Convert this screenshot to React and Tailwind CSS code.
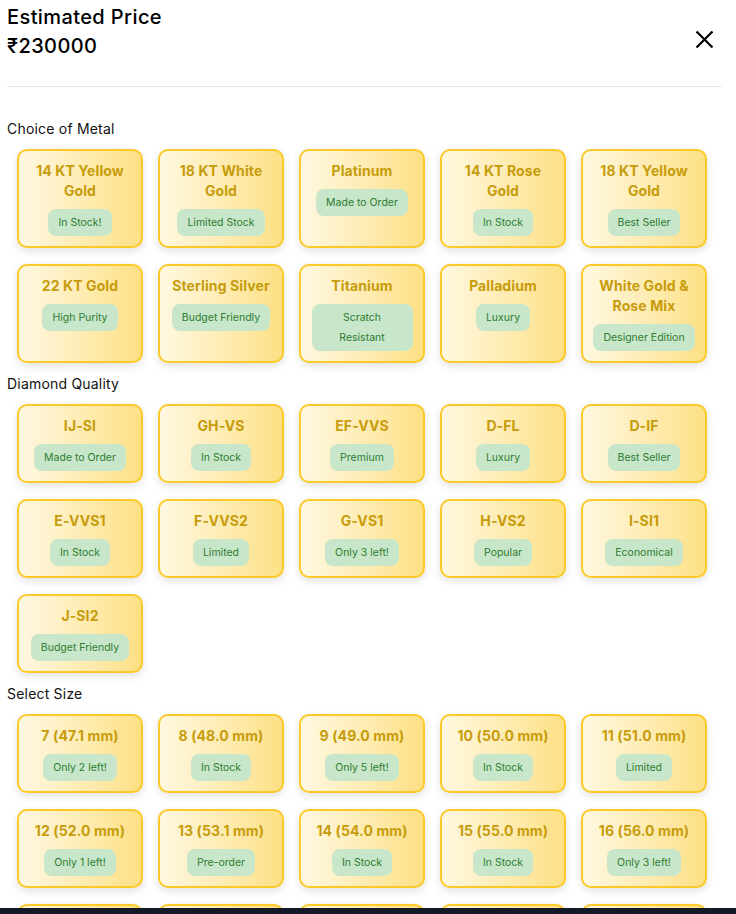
import React from "react";

const metals = [
  { t: "14 KT Yellow Gold", b: "In Stock!" },
  { t: "18 KT White Gold", b: "Limited Stock" },
  { t: "Platinum", b: "Made to Order" },
  { t: "14 KT Rose Gold", b: "In Stock" },
  { t: "18 KT Yellow Gold", b: "Best Seller" },
  { t: "22 KT Gold", b: "High Purity" },
  { t: "Sterling Silver", b: "Budget Friendly" },
  { t: "Titanium", b: ["Scratch", "Resistant"] },
  { t: "Palladium", b: "Luxury" },
  { t: "White Gold & Rose Mix", b: "Designer Edition" },
];

const diamonds = [
  { t: "IJ-SI", b: "Made to Order" },
  { t: "GH-VS", b: "In Stock" },
  { t: "EF-VVS", b: "Premium" },
  { t: "D-FL", b: "Luxury" },
  { t: "D-IF", b: "Best Seller" },
  { t: "E-VVS1", b: "In Stock" },
  { t: "F-VVS2", b: "Limited" },
  { t: "G-VS1", b: "Only 3 left!" },
  { t: "H-VS2", b: "Popular" },
  { t: "I-SI1", b: "Economical" },
  { t: "J-SI2", b: "Budget Friendly" },
];

const sizes = [
  { t: "7 (47.1 mm)", b: "Only 2 left!" },
  { t: "8 (48.0 mm)", b: "In Stock" },
  { t: "9 (49.0 mm)", b: "Only 5 left!" },
  { t: "10 (50.0 mm)", b: "In Stock" },
  { t: "11 (51.0 mm)", b: "Limited" },
  { t: "12 (52.0 mm)", b: "Only 1 left!" },
  { t: "13 (53.1 mm)", b: "Pre-order" },
  { t: "14 (54.0 mm)", b: "In Stock" },
  { t: "15 (55.0 mm)", b: "In Stock" },
  { t: "16 (56.0 mm)", b: "Only 3 left!" },
  { t: "17 (57.0 mm)", b: "In Stock" },
  { t: "18 (58.0 mm)", b: "Limited" },
  { t: "19 (59.0 mm)", b: "In Stock" },
  { t: "20 (60.0 mm)", b: "Pre-order" },
  { t: "21 (61.0 mm)", b: "Only 2 left!" },
];

function Card({ t, b }) {
  const multi = Array.isArray(b);
  return (
    <div className="rounded-[10px] border-2 border-[#fbc928] bg-gradient-to-r from-[#fff8e1] to-[#fde084] shadow-[0_3px_8px_rgba(0,0,0,0.12)] px-2 pt-[10px] pb-[10px] flex flex-col items-center text-center">
      <div className="text-[14px] leading-5 font-bold tracking-[0.1px] text-[#c79c0b]">{t}</div>
      <div
        className={
          "mt-2 rounded-lg bg-[#c8e6c9] text-[#2e7d32] text-[10.5px] leading-5 py-[3.5px] " +
          (multi ? "w-[101px]" : "px-2.5")
        }
      >
        {multi ? b.map((l) => <div key={l}>{l}</div>) : b}
      </div>
    </div>
  );
}

function Section({ label, items, first }) {
  return (
    <div className={first ? "mt-8" : "mt-[11px]"}>
      <div className="text-[14px] leading-5 text-[#111] tracking-[0.2px]">{label}</div>
      <div className="mt-[10px] pl-[10px] grid grid-cols-[repeat(5,126px)] gap-x-[15px] gap-y-4">
        {items.map((it, i) => (
          <Card key={i} {...it} />
        ))}
      </div>
    </div>
  );
}

export default function App() {
  return (
    <div
      className="bg-white min-h-screen pl-[7px] pr-[14px] text-black"
      style={{ fontFamily: "Inter, 'Open Sans', sans-serif" }}
    >
      <div className="flex justify-between items-start pt-[3px]">
        <div>
          <div className="text-[20px] leading-7 font-medium tracking-[0.4px]">Estimated Price</div>
          <div className="text-[20px] leading-7 font-medium tracking-[0.4px] mt-px">₹230000</div>
        </div>
        <svg
          className="mt-[28px] mr-[9px]"
          width="17"
          height="17"
          viewBox="0 0 17 17"
          fill="none"
          stroke="#000"
          strokeWidth="2.2"
          strokeLinecap="butt"
        >
          <line x1="0.5" y1="0.5" x2="16.5" y2="16.5" />
          <line x1="16.5" y1="0.5" x2="0.5" y2="16.5" />
        </svg>
      </div>
      <div className="mt-[26px] h-px bg-[#e8e8e8]" />
      <Section label="Choice of Metal" items={metals} first />
      <Section label="Diamond Quality" items={diamonds} />
      <Section label="Select Size" items={sizes} />
      <div className="h-10" />
      <div className="fixed left-0 right-0 bottom-0 h-[6px] bg-[#131926]" />
    </div>
  );
}
